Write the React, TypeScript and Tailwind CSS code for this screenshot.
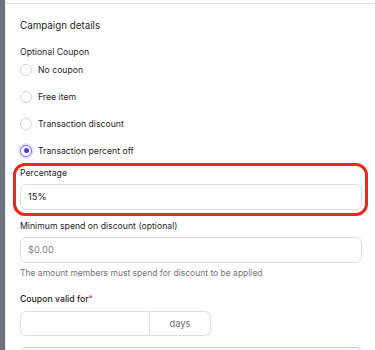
import React from "react";

function Radio({ label, checked }: { label: string; checked?: boolean }) {
  return (
    <div className="flex items-center h-[27px] shrink-0">
      {checked ? (
        <span className="w-[12px] h-[12px] rounded-full border border-[#7566f0] flex items-center justify-center bg-white shadow-[0_0_0_2px_#e6e2fc]">
          <span className="w-[5px] h-[5px] rounded-full bg-[#4a3ae0]" />
        </span>
      ) : (
        <span className="w-[12px] h-[12px] rounded-full border border-[#d6d6da] bg-white" />
      )}
      <span className="ml-[6px] text-[8.7px] leading-[12px] text-[#1f1f24]">{label}</span>
    </div>
  );
}

export default function App() {
  return (
    <div
      className="w-[375px] h-[350px] overflow-hidden bg-white flex"
      style={{ fontFamily: "Inter, 'Liberation Sans', sans-serif" }}
    >
      <div className="w-[5px] shrink-0 bg-[#6b7280]" />
      <div className="w-px shrink-0 bg-[#ececee]" />
      <div className="flex-1 min-w-0">
        <div className="h-[3px] bg-[#fafafa]" />
        <div className="h-px bg-[#dedede]" />
        <div className="pl-[14px] pr-[13px] flex flex-col">
          <div className="mt-[16px] text-[9.8px] text-[#1f1f24] leading-[12px]">Campaign details</div>
          <div className="mt-[14px] text-[8.7px] text-[#1f1f24] leading-[12px]">Optional Coupon</div>
          <div className="-mt-[2px] flex flex-col">
            <Radio label="No coupon" />
            <Radio label="Free item" />
            <Radio label="Transaction discount" />
            <Radio label="Transaction percent off" checked />
          </div>
          <div className="-ml-[7px] -mr-[6px] -mt-[1px] border-[3px] border-[#e8291c] rounded-[12px] pl-[4px] pr-[3px] pt-[1px] pb-[3px]">
            <div className="text-[8.7px] text-[#1f1f24] leading-[12px]">Percentage</div>
            <div className="mt-[5px] h-[26px] rounded-[6px] border border-[#dfdfe2] flex items-center px-[7px] text-[9.3px] text-[#1f1f24]">
              15%
            </div>
          </div>
          <div className="mt-[4px] text-[8.7px] text-[#1f1f24] leading-[12px]">
            Minimum spend on discount (optional)
          </div>
          <div className="mt-[5px] h-[26px] rounded-[6px] border border-[#dfdfe2] flex items-center px-[7px] text-[9.3px] text-[#85858b]">
            $0.00
          </div>
          <div className="mt-[5px] text-[8.5px] text-[#76767c] leading-[11px]">
            The amount members must spend for discount to be applied
          </div>
          <div className="mt-[14px] text-[8.7px] text-[#1f1f24] font-medium leading-[12px]">
            Coupon valid for<span className="text-[#e5484d]">*</span>
          </div>
          <div className="mt-[6px] flex">
            <div className="w-[130px] h-[25px] rounded-l-[6px] border border-[#dfdfe2]" />
            <div className="w-[61px] h-[25px] rounded-r-[6px] border border-l-0 border-[#dfdfe2] flex items-center justify-center text-[9.3px] text-[#6b6b70]">
              days
            </div>
          </div>
          <div className="mt-[11px] h-[20px] rounded-t-[6px] border border-[#cbc4fb]" />
        </div>
      </div>
    </div>
  );
}
